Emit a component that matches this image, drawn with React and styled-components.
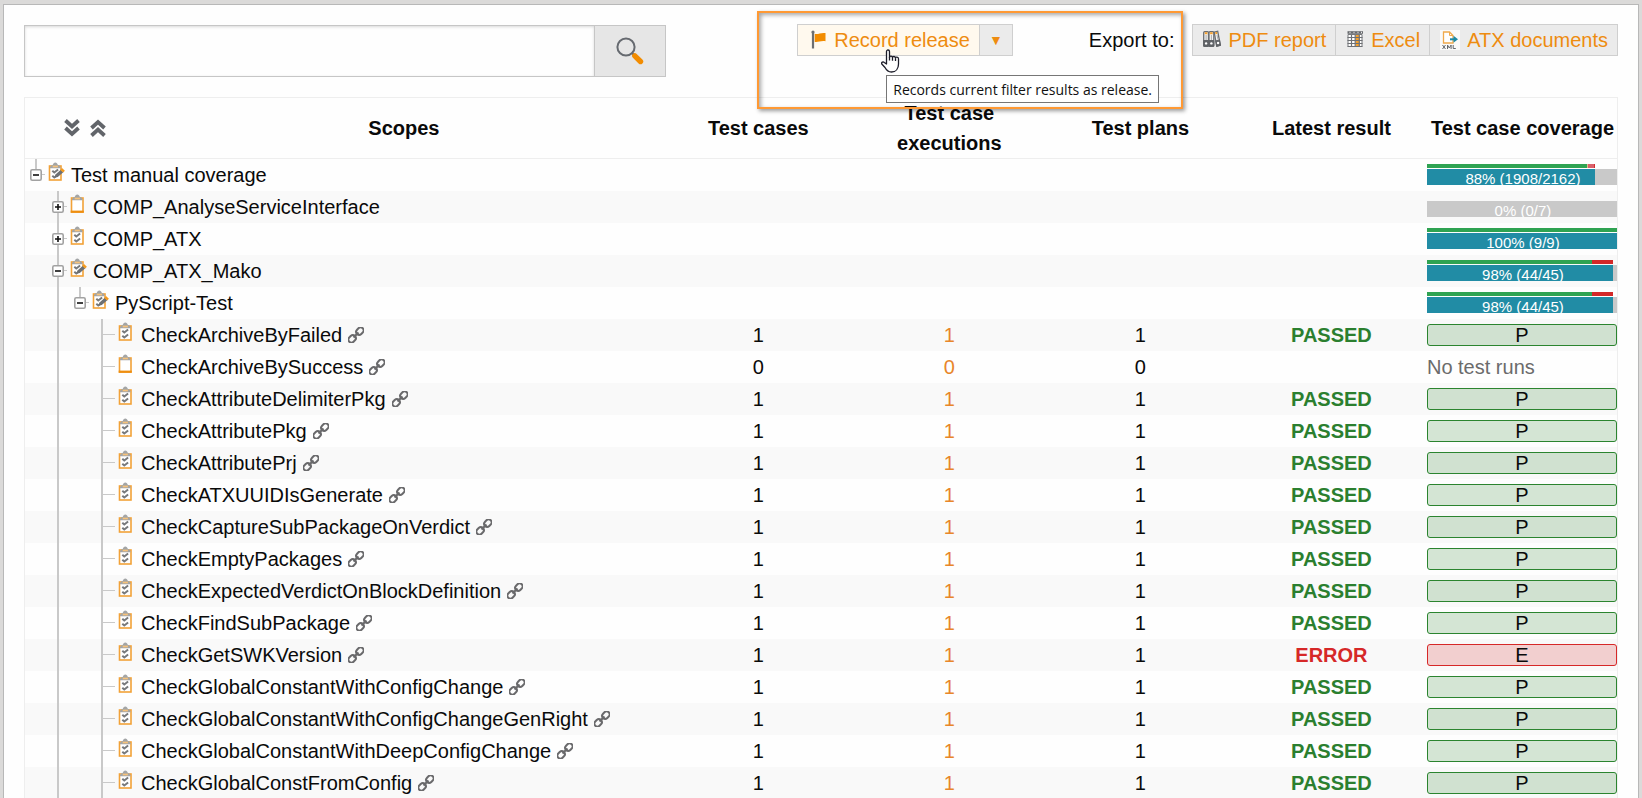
import { useState } from 'react';
import styled, { createGlobalStyle } from 'styled-components';

const passed = (name) => ({
  name,
  level: 3,
  icon: 'checked',
  counts: [1, 1, 1],
  result: 'PASSED',
});

const rows = [
  {
    name: 'Test manual coverage',
    level: 0,
    icon: 'edited',
    toggle: 'open',
    last: true,
    coverage: {
      label: '88% (1908/2162)',
      done: 88.4,
      verdicts: [
        ['#2fa352', 84.2],
        ['#d8c08a', 0.5],
        ['#d9606a', 3.2],
        ['#d32f2f', 0.5],
      ],
    },
  },
  {
    name: 'COMP_AnalyseServiceInterface',
    level: 1,
    icon: 'empty',
    toggle: 'closed',
    coverage: { label: '0% (0/7)', done: 0, verdicts: [] },
  },
  {
    name: 'COMP_ATX',
    level: 1,
    icon: 'checked',
    toggle: 'closed',
    coverage: { label: '100% (9/9)', done: 100, verdicts: [['#2fa352', 100]] },
  },
  {
    name: 'COMP_ATX_Mako',
    level: 1,
    icon: 'edited',
    toggle: 'open',
    coverage: {
      label: '98% (44/45)',
      done: 97.9,
      verdicts: [
        ['#2fa352', 86.8],
        ['#d32828', 11.1],
      ],
    },
  },
  {
    name: 'PyScript-Test',
    level: 2,
    icon: 'edited',
    toggle: 'open',
    last: true,
    coverage: {
      label: '98% (44/45)',
      done: 97.9,
      verdicts: [
        ['#2fa352', 86.8],
        ['#d32828', 11.1],
      ],
    },
  },
  passed('CheckArchiveByFailed'),
  {
    name: 'CheckArchiveBySuccess',
    level: 3,
    icon: 'empty',
    counts: [0, 0, 0],
  },
  passed('CheckAttributeDelimiterPkg'),
  passed('CheckAttributePkg'),
  passed('CheckAttributePrj'),
  passed('CheckATXUUIDIsGenerate'),
  passed('CheckCaptureSubPackageOnVerdict'),
  passed('CheckEmptyPackages'),
  passed('CheckExpectedVerdictOnBlockDefinition'),
  passed('CheckFindSubPackage'),
  { ...passed('CheckGetSWKVersion'), result: 'ERROR' },
  passed('CheckGlobalConstantWithConfigChange'),
  passed('CheckGlobalConstantWithConfigChangeGenRight'),
  passed('CheckGlobalConstantWithDeepConfigChange'),
  passed('CheckGlobalConstFromConfig'),
];

const SearchIcon = () => (
  <svg width="28" height="28" viewBox="0 0 28 28" aria-hidden="true">
    <circle cx="10" cy="10" r="8.6" fill="none" stroke="#666a70" strokeWidth="2" />
    <path d="M16 16l2.5 2.5" stroke="#666a70" strokeWidth="2.4" />
    <path d="M18.800 18.800l5.700 5.700" stroke="#f28c00" strokeWidth="5.400" strokeLinecap="round" />
  </svg>
);

const FlagIcon = () => (
  <svg width="16" height="20" viewBox="0 0 16 20" aria-hidden="true">
    <path d="M2 2v16.500" stroke="#6b6e72" strokeWidth="2.2" />
    <circle cx="2" cy="2" r="1.6" fill="#6b6e72" />
    <path d="M3.700 3.700c3 1.200 6-1.400 10.800-.6v8.200c-4.800-.8-7.800 1.400-10.800.6z" fill="#f28c00" />
  </svg>
);

const BindersIcon = () => (
  <svg width="18" height="20" viewBox="0 0 18 20" aria-hidden="true">
    <g fill="#f2f2f2" stroke="#6b6e72" strokeWidth="1.300">
      <rect x="0.700" y="1.700" width="4.800" height="14.600" rx="1" />
      <rect x="6" y="1.700" width="4.800" height="14.600" rx="1" />
      <path d="M11.200 2.200l3.500-.9 2.700 14-3.700 1z" />
    </g>
    <path d="M.7 10.500h4.800v5.800H.7zM6 10.500h4.800v5.800H6zM12.800 10.900l3.700-1 .9 5.400-3.700 1z" fill="#606367" stroke="#606367" />
    <path d="M1.800 3.300h2.600M7.100 3.300h2.600M12.300 3.300l1.900-.4" stroke="#f5a02c" strokeWidth="2" />
    <path d="M3.100 5v5M8.400 5v5M14 5l1 4.500" stroke="#a9abad" />
    <circle cx="3.100" cy="13.400" r="1.200" fill="#fff" />
    <circle cx="8.400" cy="13.400" r="1.200" fill="#fff" />
    <circle cx="15.100" cy="13" r="1.200" fill="#fff" />
  </svg>
);

const SheetIcon = () => (
  <svg width="18" height="20" viewBox="0 0 18 20" aria-hidden="true">
    <path d="M2 4.500h14v12H2z" fill="#fff" stroke="#77797d" />
    <path d="M1.500 2.500h15.500" stroke="#66696d" strokeWidth="2.600" />
    <path d="M4 1.800v1.400M8 1.800v1.400M12 1.800v1.400M15.500 1.800v1.400" stroke="#e6e6e6" />
    <path d="M9.500 5h3.700v12H9.500z" fill="#f5a02c" />
    <path d="M1.500 7.500h15M1.500 10.500h15M1.500 13.500h15M1.500 16.500h15M5.500 5v12M9.200 5v12M13.300 5v12" stroke="#6e7175" strokeWidth="1.200" />
  </svg>
);

const XmlIcon = () => (
  <svg width="20" height="20" viewBox="0 0 20 20" aria-hidden="true">
    <rect width="20" height="20" fill="#fafafa" />
    <path d="M3.500 2h6L13 5.500V13H3.500z" fill="#fff" stroke="#f0a94c" strokeWidth="1.300" />
    <path d="M9.500 2v3.500H13" fill="none" stroke="#f0a94c" />
    <path d="M10 9.300h5" stroke="#1d8aa6" strokeWidth="2" />
    <path d="M13.500 5.800l4.500 3.500-4.500 3.500z" fill="#1d8aa6" />
    <path d="M2.500 15l3 4M5.500 15l-3 4M7.500 19v-4l1.800 3 1.800-3v4M13.200 15v3.500h2.600" fill="none" stroke="#66696d" />
  </svg>
);

const PointerIcon = () => (
  <svg width="20" height="24" viewBox="0 0 20 24" aria-hidden="true">
    <path
      d="M5.500 2.500c0-2 3-2 3 0v6c0-1.800 3-1.800 3 .2 0-1.700 3-1.600 3 .4 0-1.500 3-1.500 3 .7V15c0 4.500-2.500 8-7 8-3.500 0-5-1.600-6.500-4.500L.8 15c-.7-1.700 1.300-2.800 2.500-1.500L5.500 15z"
      fill="#fff"
      stroke="#1c1c28"
      strokeWidth="1.300"
      strokeLinejoin="round"
    />
    <path d="M8.500 8v3.500M11.500 8.700v3M14.500 9.200v2.800" stroke="#1c1c28" strokeWidth="1.300" />
  </svg>
);

const ChevronsIcon = ({ up }) => (
  <svg width="16" height="18" viewBox="0 0 16 18" aria-hidden="true">
    <path
      d={up ? 'M1.500 9L8 3l6.500 6M1.500 16.500L8 10.500l6.500 6' : 'M1.500 1.500L8 7.500l6.500-6M1.500 9L8 15l6.500-6'}
      fill="none"
      stroke="#62656a"
      strokeWidth="3.800"
    />
  </svg>
);

const LinkIcon = () => (
  <svg width="16" height="16" viewBox="0 0 16 16" aria-hidden="true">
    <g fill="none" stroke="#6a6a6c" strokeWidth="2" transform="rotate(-45 8 8)">
      <rect x="-1.500" y="5" width="8" height="6" rx="3" />
      <rect x="9.500" y="5" width="8" height="6" rx="3" />
      <path d="M4.500 8h7" strokeWidth="2.200" />
    </g>
  </svg>
);

const ToggleIcon = ({ open }) => (
  <svg width="12" height="12" viewBox="0 0 12 12" aria-hidden="true">
    <rect x="0.800" y="0.800" width="10.400" height="10.400" rx="1.400" fill="#fff" stroke="#a2a2a2" strokeWidth="1.600" />
    <path d={open ? 'M3 6h6' : 'M3 6h6M6 3v6'} stroke="#111" strokeWidth="1.600" />
  </svg>
);

const ClipboardIcon = ({ kind }) => (
  <svg width="18" height="20" viewBox="0 0 18 20" aria-hidden="true">
    <rect x="1.500" y="4" width="11.500" height="14" fill="#fff" stroke="#f2a238" strokeWidth="1.600" />
    {kind === 'empty' && <path d="M.7 17.700h13.100" stroke="#ee8e10" strokeWidth="2.200" />}
    <path d="M1.900 6.200c0-2 1.200-3 2.800-3.200C5.200 1.200 6 .4 7.300.4S9.400 1.200 9.900 3c1.600.2 2.800 1.200 2.800 3.200z" fill="#a3a5a6" />
    <path d="M4.700 4.500h5.200" stroke="#f7c27a" strokeWidth="1.700" />
    {kind !== 'empty' && (
      <path d="M4.300 8.700l2 1.800 3.800-3M4.300 13.700l2 1.800 3.800-3" fill="none" stroke="#77797b" strokeWidth="2" />
    )}
    {kind === 'edited' && (
      <>
        <path d="M6.500 15.800l1-3.300 5.300-4.800 2.500 2.500-5.500 4.700z" fill="#6d7073" />
        <path d="M12.300 7.900l1.700-1.900 2.900 2.700-1.700 1.800z" fill="#f39a1f" />
      </>
    )}
  </svg>
);

const TreeName = ({ name, level, icon, toggle, last, open, onToggle }) => (
  <Tree>
    {Array.from({ length: level }, (_, depth) => (
      <Guide key={depth} $line={depth === 1 && level > 1 ? 'full' : 'none'} />
    ))}
    {toggle ? (
      <Guide $line={last ? 'top' : 'full'} $stub>
        <IconButton
          type="button"
          aria-label={`${open ? 'Collapse' : 'Expand'} ${name}`}
          onClick={onToggle}
        >
          <ToggleIcon open={open} />
        </IconButton>
      </Guide>
    ) : (
      <Guide $line="full" $leaf />
    )}
    <NodeIcon>
      <ClipboardIcon kind={icon} />
    </NodeIcon>
    <span>{name}</span>
    {!toggle && (
      <PackageLink href="#package" aria-label={`Link to ${name}`}>
        <LinkIcon />
      </PackageLink>
    )}
  </Tree>
);

const Coverage = ({ coverage, result }) => {
  if (coverage) {
    return (
      <>
        <Verdicts>
          {coverage.verdicts.map(([color, share]) => (
            <div key={color} style={{ width: `${share}%`, background: color }} />
          ))}
        </Verdicts>
        <Bar>
          <BarFill style={{ width: `${coverage.done}%` }} />
          <BarLabel>{coverage.label}</BarLabel>
        </Bar>
      </>
    );
  }

  return result ? <Badge $error={result === 'ERROR'}>{result[0]}</Badge> : 'No test runs';
};

const App = () => {
  const [toggled, setToggled] = useState({});

  const flip = (name) => setToggled((prev) => ({ ...prev, [name]: !prev[name] }));

  return (
    <>
      <GlobalStyle />
      <Page>
        <Toolbar>
          <Search role="search" onSubmit={(event) => event.preventDefault()}>
            <SearchInput type="text" aria-label="Search scopes" />
            <SearchButton type="submit" aria-label="Search">
              <SearchIcon />
            </SearchButton>
          </Search>
          <ReleaseArea>
            <ButtonGroup>
              <ToolButton type="button" $active>
                <FlagIcon />
                Record release
              </ToolButton>
              <MenuButton type="button" aria-label="More release actions">
                ▼
              </MenuButton>
            </ButtonGroup>
            <span>Export to:</span>
            <Highlight />
            <Tooltip role="tooltip">Records current filter results as release.</Tooltip>
            <Pointer>
              <PointerIcon />
            </Pointer>
          </ReleaseArea>
          <ButtonGroup>
            <ToolButton type="button">
              <BindersIcon />
              PDF report
            </ToolButton>
            <ToolButton type="button">
              <SheetIcon />
              Excel
            </ToolButton>
            <ToolButton type="button">
              <XmlIcon />
              ATX documents
            </ToolButton>
          </ButtonGroup>
        </Toolbar>
        <TableFrame>
          <Table>
            <thead>
              <tr>
                <HeadCell $wide>
                  <ScopesHead>
                    <IconButton type="button" aria-label="Expand all">
                      <ChevronsIcon />
                    </IconButton>
                    <IconButton type="button" aria-label="Collapse all">
                      <ChevronsIcon up />
                    </IconButton>
                    <ScopesTitle>Scopes</ScopesTitle>
                  </ScopesHead>
                </HeadCell>
                <HeadCell>Test cases</HeadCell>
                <HeadCell>
                  Test case
                  <br />
                  executions
                </HeadCell>
                <HeadCell>Test plans</HeadCell>
                <HeadCell>Latest result</HeadCell>
                <HeadCell>Test case coverage</HeadCell>
              </tr>
            </thead>
            <tbody>
              {rows.map((row) => {
                const [cases, executions, plans] = row.counts ?? [];
                return (
                  <Row key={row.name}>
                    <Cell>
                      <TreeName
                        {...row}
                        open={(row.toggle === 'open') !== Boolean(toggled[row.name])}
                        onToggle={() => flip(row.name)}
                      />
                    </Cell>
                    <Cell $center>{cases}</Cell>
                    <Cell $center>
                      {row.counts && <CountLink href="#executions">{executions}</CountLink>}
                    </Cell>
                    <Cell $center>{plans}</Cell>
                    <ResultCell $center $error={row.result === 'ERROR'}>
                      {row.result}
                    </ResultCell>
                    <CoverageCell>
                      <Coverage coverage={row.coverage} result={row.result} />
                    </CoverageCell>
                  </Row>
                );
              })}
            </tbody>
          </Table>
        </TableFrame>
      </Page>
    </>
  );
};

const GlobalStyle = createGlobalStyle`
  * {
    box-sizing: border-box;
  }

  body {
    margin: 0;
    background: #dbdad9;
    color: #0a0a0a;
    font: 20px/30px 'Liberation Sans', Arial, sans-serif;
  }

  button, input {
    font: inherit;
    color: inherit;
  }

  svg {
    display: block;
    flex: none;
  }
`;

const Page = styled.main`
  height: calc(100vh - 4px);
  margin: 4px 3px 0;
  padding: 19px 20px 0;
  overflow: hidden;
  border: 1px solid #b8b8b8;
  border-bottom: 0;
  background: #fefefe;
`;

const Toolbar = styled.div`
  display: flex;
  align-items: flex-start;
  height: 73px;
`;

const Search = styled.form`
  display: flex;
  flex: 0 1 642px;
  height: 52px;
  margin: 1px auto 0 0;
`;

const SearchInput = styled.input`
  flex: 1;
  min-width: 0;
  padding: 0 12px;
  border: 1px solid #c6c6c6;
  border-right: 0;
  border-radius: 0;
  background: #fefefe;
  box-shadow: inset 0 1px 3px rgba(0, 0, 0, 0.15);
`;

const SearchButton = styled.button`
  display: flex;
  align-items: center;
  justify-content: center;
  width: 72px;
  padding: 0;
  border: 1px solid #c6c6c6;
  background: #e6e6e6;
  cursor: pointer;
`;

const ReleaseArea = styled.div`
  position: relative;
  display: flex;
  align-items: center;
  gap: 76px;
  margin-right: 18px;
  white-space: nowrap;
`;

const Highlight = styled.div`
  position: absolute;
  top: -13px;
  left: -40px;
  right: -9px;
  height: 98px;
  border: 2px solid #ff9933;
  box-shadow: 2px 2px 4px rgba(0, 0, 0, 0.4), inset 2px 2px 4px rgba(0, 0, 0, 0.35);
  pointer-events: none;
`;

const Tooltip = styled.div`
  position: absolute;
  top: 51px;
  left: 89px;
  padding: 1px 6px 0;
  border: 1px solid #767676;
  background: #fff;
  color: #111;
  font: 14px/25px 'Open Sans', 'Noto Sans', sans-serif;
`;

const Pointer = styled.div`
  position: absolute;
  top: 25px;
  left: 84px;
  pointer-events: none;
`;

const ButtonGroup = styled.div`
  display: flex;
`;

const ToolButton = styled.button`
  display: flex;
  align-items: center;
  gap: 7px;
  height: 32px;
  padding: 0 9px 0 ${(props) => (props.$active ? 13 : 10)}px;
  border: 1px solid #cfcfcf;
  background: ${(props) => (props.$active ? '#fff9ee' : '#ebebeb')};
  color: #ee8c10;
  white-space: nowrap;
  cursor: pointer;

  & + & {
    border-left: 0;
  }
`;

const MenuButton = styled(ToolButton)`
  justify-content: center;
  width: 33px;
  padding: 0;
  border-left: 0;
  font-size: 14px;
`;

const TableFrame = styled.div`
  border: 1px solid #eeeeee;
`;

const Table = styled.table`
  width: 100%;
  table-layout: fixed;
  border-collapse: separate;
  border-spacing: 0;
`;

const HeadCell = styled.th`
  width: ${(props) => (props.$wide ? '40%' : '12%')};
  height: 61px;
  padding: 0 0 0 2px;
  border-bottom: 1px solid #eeeeee;
  font-weight: bold;
  white-space: nowrap;
`;

const ScopesHead = styled.div`
  display: flex;
  align-items: center;
  gap: 10px;
  padding-left: 37px;
`;

const ScopesTitle = styled.span`
  flex: 1;
  padding-left: 30px;
`;

const IconButton = styled.button`
  padding: 0;
  border: 0;
  background: none;
  cursor: pointer;
`;

const Row = styled.tr`
  height: 32px;

  &:nth-child(even) {
    background: #f9f9f9;
  }
`;

const Cell = styled.td`
  padding: 0 0 0 ${(props) => (props.$center ? 2 : 0)}px;
  line-height: 32px;
  text-align: ${(props) => (props.$center ? 'center' : 'left')};
  white-space: nowrap;
`;

const ResultCell = styled(Cell)`
  color: ${(props) => (props.$error ? '#d62828' : '#2b7f2f')};
  font-weight: bold;
`;

const CoverageCell = styled(Cell)`
  height: 32px;
  padding-left: 1px;
  color: #6b6b6b;
`;

const CountLink = styled.a`
  color: #e8862a;
  text-decoration: none;
`;

const Tree = styled.div`
  display: flex;
  height: 32px;
`;

const lines = {
  none: '0',
  top: '50%',
  full: '100%',
};

/* one indentation step: a vertical guide plus an optional stub to the right */
const Guide = styled.div`
  display: flex;
  align-items: center;
  justify-content: center;
  width: ${(props) => (props.$leaf ? 26 : 22)}px;
  background-image: linear-gradient(#c9c9c9, #c9c9c9), linear-gradient(#c9c9c9, #c9c9c9);
  background-repeat: no-repeat;
  background-position: 10px 0, 12px 15px;
  background-size: 2px ${(props) => lines[props.$line]},
    ${(props) => (props.$leaf ? '12px 1px' : props.$stub ? '8px 1px' : '0 0')};
`;

const NodeIcon = styled.span`
  padding: 3px 5px 0 1px;
`;

const PackageLink = styled.a`
  padding: 8px 0 0 6px;
`;

const Verdicts = styled.div`
  display: flex;
  height: 4px;
  margin-bottom: 1px;
`;

const Bar = styled.div`
  display: grid;
  height: 16px;
  margin-bottom: 1px;
  overflow: hidden;
  background: #c9c9c9;

  & > * {
    grid-area: 1 / 1;
  }
`;

const BarFill = styled.div`
  background: #218ca5;
`;

const BarLabel = styled.span`
  padding-left: 2px;
  color: #ffffff;
  font-size: 15px;
  line-height: 20px;
  text-align: center;
`;

const Badge = styled.div`
  height: 22px;
  border: 1px solid ${(props) => (props.$error ? '#d62828' : '#2b842f')};
  border-radius: 3px;
  background: ${(props) => (props.$error ? 'rgba(214, 40, 40, 0.2)' : 'rgba(43, 132, 47, 0.2)')};
  color: #0a0a0a;
  line-height: 20px;
  text-align: center;
`;

export default App;
